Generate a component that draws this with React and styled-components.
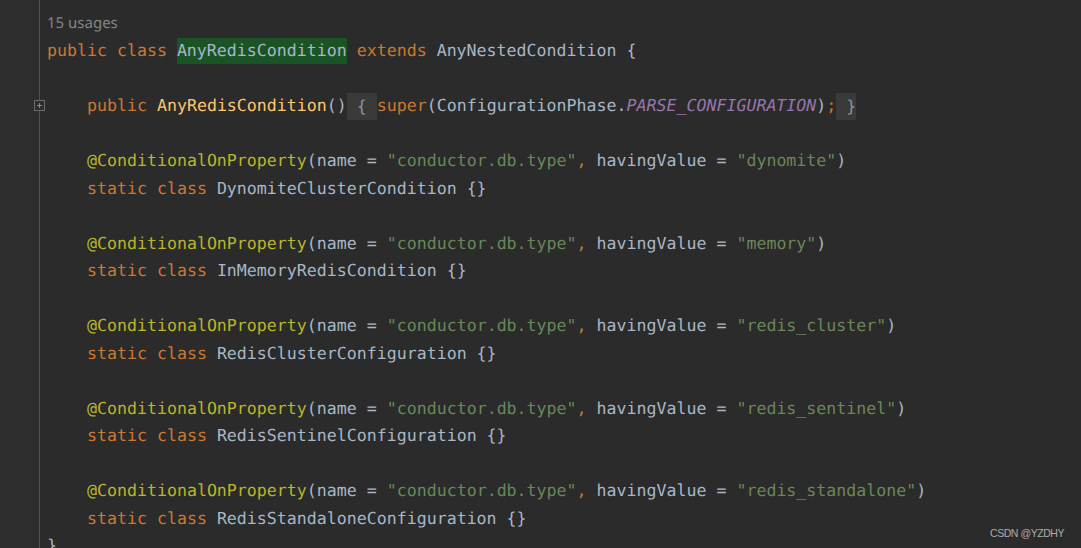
import React from "react";
import styled, { createGlobalStyle } from "styled-components";

const Global = createGlobalStyle`
  html, body { margin: 0; padding: 0; background: #2b2b2b; overflow: hidden; }
  #root { height: 100vh; }
`;

const ROW = 27.53;

const Editor = styled.div`
  position: relative;
  display: flex;
  height: 100vh;
  background: #2b2b2b;
  overflow: hidden;
`;

const Gutter = styled.div`
  flex: 0 0 39px;
  background: #2d2d2d;
  border-right: 1px solid #505050;
  padding-top: 9.5px;
  display: flex;
  flex-direction: column;
`;

const GutterCell = styled.div`
  flex: 0 0 ${ROW}px;
  height: ${ROW}px;
  display: flex;
  align-items: center;
  justify-content: flex-end;
  margin-right: -6px;
`;

const FoldBox = styled.span`
  width: 9px;
  height: 9px;
  border: 1px solid #6b6b6b;
  background: #2d2d2d;
  position: relative;
  &::before, &::after {
    content: "";
    position: absolute;
    background: #8a8a8a;
  }
  &::before { left: 2px; right: 2px; top: 4px; height: 1px; }
  &::after { top: 2px; bottom: 2px; left: 4px; width: 1px; }
`;

const Code = styled.div`
  flex: 1;
  padding: 9.5px 0 0 7px;
  display: flex;
  flex-direction: column;
  font-family: "DejaVu Sans Mono", "Liberation Mono", monospace;
  font-size: 16.6px;
  color: #a9b7c6;
  text-rendering: geometricPrecision;
`;

const Hint = styled.div`
  flex: 0 0 ${ROW}px;
  height: ${ROW}px;
  line-height: ${ROW}px;
  font-family: "Noto Sans", "Open Sans", sans-serif;
  font-size: 15px;
  color: #858585;
`;

const Line = styled.div`
  flex: 0 0 ${ROW}px;
  height: ${ROW}px;
  line-height: ${ROW}px;
  white-space: pre;
  padding-left: ${(p) => p.$indent * 10}px;
`;

const colors = {
  kw: "#cc7832",
  plain: "#a9b7c6",
  ann: "#bbb529",
  str: "#6a8759",
  const: "#9876aa",
  method: "#ffc66d",
  fold: "#8c959e",
};

const Tok = styled.span`
  color: ${(p) => colors[p.$kind]};
  font-style: ${(p) => (p.$kind === "const" ? "italic" : "normal")};
`;

const Usage = styled.span`
  display: inline-block;
  height: 26px;
  line-height: 26px;
  vertical-align: middle;
  background: #1a5425;
  color: #a9b7c6;
`;

const Folded = styled.span`
  display: inline-block;
  height: 27px;
  line-height: 27px;
  vertical-align: middle;
  background: #3a3a3a;
  color: ${colors.fold};
`;

const Watermark = styled.div`
  position: absolute;
  right: 17px;
  bottom: 9px;
  font-family: "Liberation Sans", Arial, sans-serif;
  font-size: 10.5px;
  letter-spacing: -0.45px;
  color: #ababab;
`;

const annotation = (value) => [
  ["ann", "@ConditionalOnProperty"],
  ["plain", "(name = "],
  ["str", '"conductor.db.type"'],
  ["kw", ", "],
  ["plain", "havingValue = "],
  ["str", `"${value}"`],
  ["plain", ")"],
];

const staticClass = (name) => [
  ["kw", "static class "],
  ["plain", `${name} {}`],
];

const groups = [
  ["dynomite", "DynomiteClusterCondition"],
  ["memory", "InMemoryRedisCondition"],
  ["redis_cluster", "RedisClusterConfiguration"],
  ["redis_sentinel", "RedisSentinelConfiguration"],
  ["redis_standalone", "RedisStandaloneConfiguration"],
];

const renderTokens = (tokens) =>
  tokens.map(([kind, text], i) => {
    if (kind === "usage") return <Usage key={i}>{text}</Usage>;
    if (kind === "folded") return <Folded key={i}>{text}</Folded>;
    return (
      <Tok key={i} $kind={kind}>
        {text}
      </Tok>
    );
  });

const lines = [];
lines.push({
  indent: 0,
  tokens: [
    ["kw", "public class "],
    ["usage", "AnyRedisCondition"],
    ["kw", " extends "],
    ["plain", "AnyNestedCondition {"],
  ],
});
lines.push({ indent: 0, tokens: [] });
lines.push({
  indent: 4,
  fold: true,
  tokens: [
    ["kw", "public "],
    ["method", "AnyRedisCondition"],
    ["plain", "()"],
    ["folded", " { "],
    ["kw", "super"],
    ["plain", "(ConfigurationPhase."],
    ["const", "PARSE_CONFIGURATION"],
    ["plain", ")"],
    ["kw", ";"],
    ["folded", " }"],
  ],
});
groups.forEach(([value, name]) => {
  lines.push({ indent: 0, tokens: [] });
  lines.push({ indent: 4, tokens: annotation(value) });
  lines.push({ indent: 4, tokens: staticClass(name) });
});
lines.push({ indent: 0, tokens: [["plain", "}"]] });

export default function App() {
  return (
    <>
      <Global />
      <Editor>
        <Gutter>
          <GutterCell />
          {lines.map((l, i) => (
            <GutterCell key={i}>{l.fold ? <FoldBox /> : null}</GutterCell>
          ))}
        </Gutter>
        <Code>
          <Hint>15 usages</Hint>
          {lines.map((l, i) => (
            <Line key={i} $indent={l.indent}>
              {renderTokens(l.tokens)}
            </Line>
          ))}
        </Code>
        <Watermark>CSDN @YZDHY</Watermark>
      </Editor>
    </>
  );
}
